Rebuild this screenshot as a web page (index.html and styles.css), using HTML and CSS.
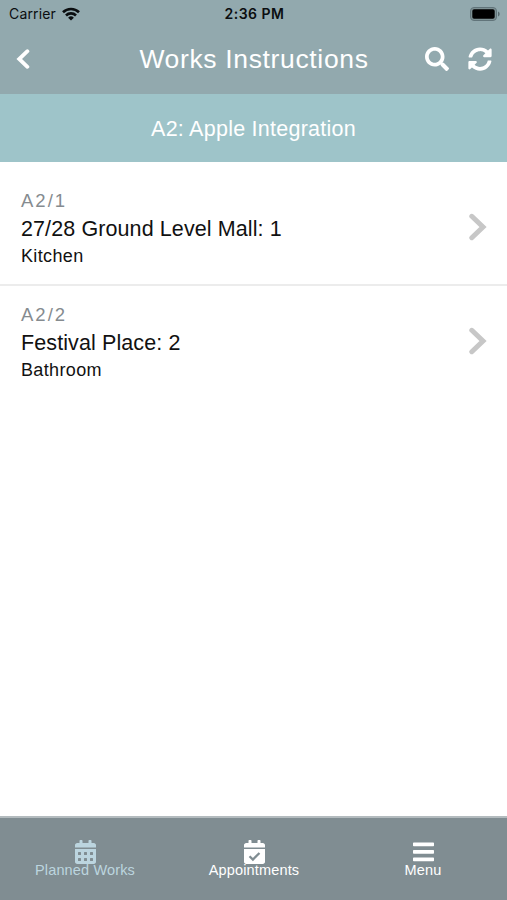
FILE: index.html
```html
<!DOCTYPE html>
<html lang="en">
<head>
    <meta charset="UTF-8">
    <meta name="viewport" content="width=device-width, initial-scale=1.0">
    <title>Works Instructions</title>
    <link rel="stylesheet" href="styles.css">
</head>
<body>
    <header class="header">
        <div class="status">
            <div class="carrier">
                <span>Carrier</span>
                <svg class="wifi" viewBox="0 0 18 14" fill="none" stroke="#0b0e10" stroke-width="2.6">
                    <path d="M1 5.3a11.4 11.4 0 0 1 16 0"/>
                    <path d="M4 8.5a7 7 0 0 1 10 0"/>
                    <path d="M9 13.6L6.1 10.7a4.1 4.1 0 0 1 5.8 0z" fill="#0b0e10" stroke="none"/>
                </svg>
            </div>
            <span class="time">2:36 PM</span>
            <svg class="battery" viewBox="0 0 30 14">
                <rect x="0.5" y="0.5" width="26" height="13" rx="3.5" fill="#7e9194" stroke="#61747a"/>
                <rect x="2.3" y="2.3" width="22.4" height="9.4" rx="1.8" fill="#000"/>
                <path d="M28 4.6c2.2.8 2.2 4 0 4.8z" fill="#586a6f"/>
            </svg>
        </div>
        <div class="navbar">
            <div class="nav-left">
                <svg class="back" viewBox="0 0 14 20" fill="none" stroke="#fff" stroke-width="3.8" stroke-linecap="round"><path d="M11.4 2.2L3.2 10l8.2 7.8"/></svg>
            </div>
            <h1>Works Instructions</h1>
            <div class="nav-right">
                <svg viewBox="0 0 512 512" fill="#fff"><path d="M505 442.700L405.300 343c-4.500-4.500-10.600-7-17-7H372c27.600-35.300 44-79.700 44-128C416 93.100 322.900 0 208 0S0 93.100 0 208s93.100 208 208 208c48.300 0 92.700-16.400 128-44v16.300c0 6.400 2.500 12.500 7 17l99.700 99.700c9.400 9.400 24.600 9.400 33.900 0l28.300-28.300c9.400-9.400 9.400-24.600.1-34zM208 336c-70.700 0-128-57.200-128-128 0-70.700 57.200-128 128-128 70.700 0 128 57.200 128 128 0 70.700-57.200 128-128 128z"/></svg>
                <svg viewBox="0 0 512 512" fill="#fff"><path d="M370.720 133.280C339.458 104.008 298.888 87.962 255.848 88c-77.458.068-144.328 53.178-162.791 126.850-1.344 5.363-6.122 9.150-11.651 9.150H24.103c-7.498 0-13.194-6.807-11.807-14.176C33.933 94.924 134.813 8 256 8c66.448 0 126.791 26.136 171.315 68.685L463.030 40.970C478.149 25.851 504 36.559 504 57.941V192c0 13.255-10.745 24-24 24H345.941c-21.382 0-32.090-25.851-16.971-40.971l41.750-41.749zM32 296h134.059c21.382 0 32.090 25.851 16.971 40.971l-41.750 41.750c31.262 29.273 71.835 45.319 114.876 45.280 77.418-.070 144.315-53.144 162.787-126.849 1.344-5.363 6.122-9.150 11.651-9.150h57.304c7.498 0 13.194 6.807 11.807 14.176C478.067 417.076 377.187 504 256 504c-66.448 0-126.791-26.136-171.315-68.685L48.970 471.030C33.851 486.149 8 475.441 8 454.059V320c0-13.255 10.745-24 24-24z"/></svg>
            </div>
        </div>
    </header>
    <div class="subheader">A2: Apple Integration</div>

    <main class="list">
        <a class="item">
            <div>
                <p class="ref">A2/1</p>
                <p class="name">27/28 Ground Level Mall: 1</p>
                <p class="room">Kitchen</p>
            </div>
            <svg class="chevron" viewBox="0 0 18 28" fill="none" stroke="#c7c7c7" stroke-width="5" stroke-linecap="round"><path d="M2.800 3.300L14 14 2.800 24.700"/></svg>
        </a>
        <a class="item">
            <div>
                <p class="ref">A2/2</p>
                <p class="name">Festival Place: 2</p>
                <p class="room">Bathroom</p>
            </div>
            <svg class="chevron" viewBox="0 0 18 28" fill="none" stroke="#c7c7c7" stroke-width="5" stroke-linecap="round"><path d="M2.800 3.300L14 14 2.800 24.700"/></svg>
        </a>
    </main>

    <nav class="tabs">
        <a class="tab active">
            <svg viewBox="0 0 448 512" fill="currentColor"><path d="M0 464c0 26.500 21.500 48 48 48h352c26.500 0 48-21.500 48-48V192H0v272zm320-196c0-6.600 5.400-12 12-12h40c6.600 0 12 5.400 12 12v40c0 6.600-5.400 12-12 12h-40c-6.600 0-12-5.400-12-12v-40zm0 128c0-6.600 5.400-12 12-12h40c6.600 0 12 5.400 12 12v40c0 6.600-5.400 12-12 12h-40c-6.600 0-12-5.400-12-12v-40zM192 268c0-6.600 5.400-12 12-12h40c6.600 0 12 5.400 12 12v40c0 6.600-5.400 12-12 12h-40c-6.600 0-12-5.400-12-12v-40zm0 128c0-6.600 5.400-12 12-12h40c6.600 0 12 5.400 12 12v40c0 6.600-5.400 12-12 12h-40c-6.600 0-12-5.400-12-12v-40zM64 268c0-6.600 5.400-12 12-12h40c6.600 0 12 5.400 12 12v40c0 6.600-5.400 12-12 12H76c-6.600 0-12-5.400-12-12v-40zm0 128c0-6.600 5.400-12 12-12h40c6.600 0 12 5.400 12 12v40c0 6.600-5.400 12-12 12H76c-6.600 0-12-5.400-12-12v-40zM400 64h-48V16c0-8.800-7.200-16-16-16h-32c-8.800 0-16 7.200-16 16v48H160V16c0-8.800-7.200-16-16-16h-32c-8.800 0-16 7.200-16 16v48H48C21.500 64 0 85.500 0 112v48h448v-48c0-26.500-21.500-48-48-48z"/></svg>
            <span>Planned Works</span>
        </a>
        <a class="tab">
            <svg viewBox="0 0 448 512" fill="currentColor"><path d="M0 464c0 26.500 21.500 48 48 48h352c26.500 0 48-21.500 48-48V192H0v272zM400 64h-48V16c0-8.800-7.200-16-16-16h-32c-8.800 0-16 7.200-16 16v48H160V16c0-8.800-7.200-16-16-16h-32c-8.800 0-16 7.200-16 16v48H48C21.500 64 0 85.500 0 112v48h448v-48c0-26.500-21.500-48-48-48z"/><path d="M118 345l72 72 140-140" fill="none" stroke="#808d92" stroke-width="48"/></svg>
            <span>Appointments</span>
        </a>
        <a class="tab">
            <svg viewBox="0 0 448 512" fill="currentColor"><path d="M16 52h416q16 0 16 16v48q0 16-16 16H16q-16 0-16-16V68q0-16 16-16zM16 212h416q16 0 16 16v48q0 16-16 16H16q-16 0-16-16v-48q0-16 16-16zM16 372h416q16 0 16 16v48q0 16-16 16H16q-16 0-16-16v-48q0-16 16-16z"/></svg>
            <span>Menu</span>
        </a>
    </nav>
</body>
</html>
```
FILE: styles.css
```css
* {
    box-sizing: border-box;
    margin: 0;
    padding: 0;
}
body {
    height: 100vh;
    display: flex;
    flex-direction: column;
    font-family: "Liberation Sans", Arial, sans-serif;
    background: #fff;
    color: #111;
    overflow: hidden;
}
.header {
    height: 94px;
    background: #92a9ae;
}
.status {
    height: 27px;
    display: grid;
    grid-template-columns: 1fr auto 1fr;
    align-items: center;
    padding: 0 7px 0 9px;
    font-family: Inter, sans-serif;
    font-size: 14px;
    letter-spacing: 0.15px;
    color: #0b0e10;
}
.carrier {
    display: flex;
    align-items: center;
    gap: 6px;
}
.wifi {
    width: 18px;
    height: 14px;
}
.time {
    font-weight: 600;
    letter-spacing: 0.5px;
}
.battery {
    width: 30px;
    height: 14px;
    justify-self: end;
}
.navbar {
    height: 64px;
    display: grid;
    grid-template-columns: 1fr auto 1fr;
    align-items: center;
    padding: 0 15px 0 16px;
}
.nav-left,
.nav-right {
    display: flex;
    align-items: center;
}
.nav-right {
    justify-content: flex-end;
    gap: 19px;
}
.nav-right svg {
    width: 24px;
    height: 24px;
}
.back {
    width: 14px;
    height: 20px;
}
h1 {
    font-size: 26.5px;
    font-weight: normal;
    letter-spacing: 0.65px;
    color: #fff;
}
.subheader {
    height: 68px;
    line-height: 70px;
    text-align: center;
    font-size: 21.5px;
    letter-spacing: 0.25px;
    color: #fff;
    background: #9ec4c9;
}
.list {
    flex: 1;
    padding-top: 10px;
}
.item {
    height: 114px;
    display: flex;
    justify-content: space-between;
    padding: 17px 20px 0 21px;
    border-bottom: 2px solid #ececec;
}
.item:last-child {
    border-bottom: none;
}
.ref {
    font-size: 18.5px;
    line-height: 24px;
    letter-spacing: 2px;
    color: #858b8f;
}
.name {
    font-size: 21.5px;
    line-height: 33px;
    letter-spacing: 0.1px;
}
.room {
    font-size: 18px;
    line-height: 21px;
    letter-spacing: 0.35px;
}
.chevron {
    width: 18px;
    height: 28px;
    margin-top: 24px;
}
.tabs {
    height: 84px;
    display: grid;
    grid-template-columns: repeat(3, 1fr);
    background: #808d92;
    border-top: 2px solid #b3bbbe;
}
.tab {
    display: flex;
    flex-direction: column;
    align-items: center;
    padding: 22px 0 0 1px;
    font-size: 14.5px;
    line-height: 12px;
    letter-spacing: 0.15px;
    color: #fff;
}
.tab svg {
    width: 21px;
    height: 24px;
}
.active {
    color: #bcd5df;
}
```
